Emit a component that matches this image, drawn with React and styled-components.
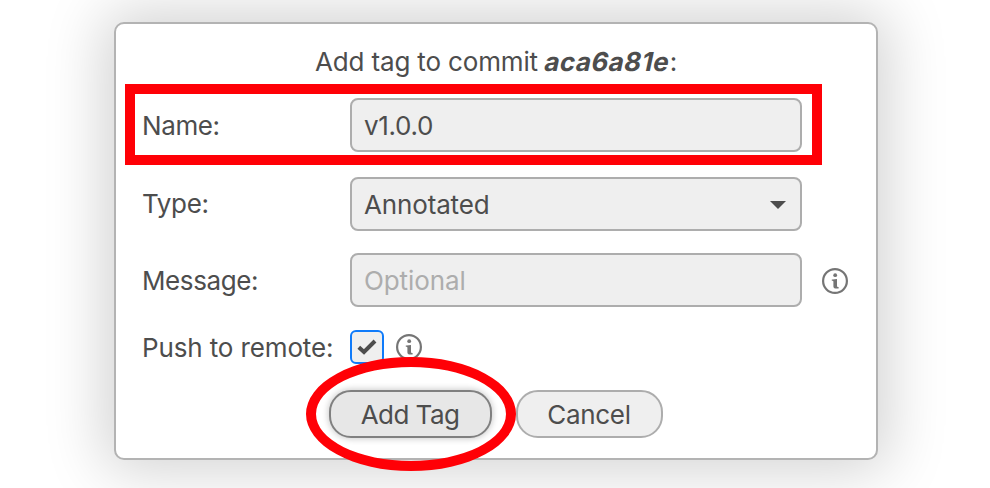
import styled, { createGlobalStyle } from "styled-components";
import { useState } from "react";

const GlobalStyle = createGlobalStyle`
  * {
    box-sizing: border-box;
  }
  body {
    margin: 0;
    background-color: #fff;
    overflow: hidden;
  }
`;

// container
const Page = styled.div`
  display: flex;
  justify-content: center;
  height: 488px;
  padding: 22px 0 28px 2px;
  font-family: Inter, "Liberation Sans", sans-serif;
  font-size: 26px;
  line-height: 32px;
  color: #4d4d4d;
`;

const Dialog = styled.form`
  width: 764px;
  height: 438px;
  padding: 22px 26px 0;
  background-color: #fff;
  border: 2px solid #b3b3b3;
  border-radius: 10px;
  box-shadow: 0 0 60px 10px rgba(0, 0, 0, 0.18);
`;

const Title = styled.div`
  text-align: center;
  white-space: nowrap;
  letter-spacing: -0.15px;
`;

// slanted upright glyphs, so the two-storey "a" is kept
const CommitHash = styled.span`
  display: inline-block;
  font-weight: 700;
  letter-spacing: 0.4px;
  transform: skewX(-12deg);
`;

// form rows
const Row = styled.div`
  position: relative;
  display: flex;
  align-items: center;
  height: ${({ $height }) => $height || 54}px;
  margin-top: ${({ $gap }) => $gap}px;
`;

const Label = styled.label`
  width: 208px;
  flex-shrink: 0;
  padding-top: ${({ $drop = 2 }) => $drop}px;
  white-space: nowrap;
  letter-spacing: ${({ $spacing }) => $spacing || 0}px;
`;

const TextInput = styled.input`
  width: 452px;
  height: 54px;
  padding: 0 12px;
  font: inherit;
  letter-spacing: ${({ $spacing }) => $spacing || 0}px;
  color: #4d4d4d;
  background-color: #efefef;
  border: 2px solid #adadad;
  border-radius: 8px;
  outline: none;
  &::placeholder {
    color: #adadad;
    opacity: 1;
  }
`;

const Select = styled.div`
  display: flex;
  align-items: center;
  justify-content: space-between;
  width: 452px;
  height: 54px;
  padding: 2px 14px 0 12px;
  letter-spacing: -0.15px;
  background-color: #efefef;
  border: 2px solid #adadad;
  border-radius: 8px;
`;

const Checkbox = styled.div`
  display: flex;
  align-items: center;
  justify-content: center;
  width: 34px;
  height: 34px;
  background-color: #efefef;
  border: 2px solid #0f7bfa;
  border-radius: 6px;
`;

const InfoWrapper = styled.span`
  display: flex;
  margin-left: ${({ $left }) => $left}px;
  padding-top: ${({ $drop }) => $drop || 0}px;
`;

// buttons
const Actions = styled.div`
  display: flex;
  gap: 24px;
  margin-top: 26px;
  padding-left: 187px;
`;

const Button = styled.button`
  position: relative;
  width: ${({ $primary }) => ($primary ? 163 : 147)}px;
  height: 48px;
  padding: 2px 1px 0 0;
  font: inherit;
  letter-spacing: ${({ $primary }) => ($primary ? -0.55 : -0.3)}px;
  white-space: nowrap;
  color: #4d4d4d;
  background-color: ${({ $primary }) => ($primary ? "#e7e7e7" : "#efefef")};
  border: 2px solid ${({ $primary }) => ($primary ? "#808080" : "#adadad")};
  border-radius: 22px;
  box-shadow: ${({ $primary }) =>
    $primary ? "0 0 6px 1px rgba(0, 0, 0, 0.2)" : "none"};
`;

// red marks
const BoxMark = styled.div`
  position: absolute;
  top: -14px;
  left: -17px;
  width: 697px;
  height: 81px;
  border: 10px solid #ff0006;
  pointer-events: none;
`;

const EllipseMark = styled.div`
  position: absolute;
  top: -35px;
  left: -25px;
  width: 210px;
  height: 114px;
  border: 10px solid #ff0006;
  border-radius: 50%;
  pointer-events: none;
`;

function InfoIcon({ left, drop }) {
  return (
    <InfoWrapper $left={left} $drop={drop}>
      <svg width="26" height="26" viewBox="0 0 26 26" fill="#757575">
        <circle
          cx="13"
          cy="13"
          r="11.9"
          fill="none"
          stroke="#757575"
          strokeWidth="2.2"
        />
        <circle cx="13.2" cy="7.2" r="1.9" />
        <path d="M9.8 11.4c1.6.1 3.4-.1 5.2-.3v6.7c0 1 .3 1.2 1.6 1.3v1.3c-2.4.4-5.2.3-5.2-2v-4.6c0-.9-.4-1.1-1.6-1.1z" />
      </svg>
    </InfoWrapper>
  );
}

function App() {
  const [name, setName] = useState("v1.0.0");
  const [message, setMessage] = useState("");
  const [push, setPush] = useState(true);

  return (
    <Page>
      <GlobalStyle />
      <Dialog onSubmit={(e) => e.preventDefault()}>
        <Title>
          Add tag to commit <CommitHash>aca6a81e</CommitHash>:
        </Title>
        <Row $gap={20}>
          <Label $spacing={-0.4}>Name:</Label>
          <TextInput
            $spacing={-0.3}
            value={name}
            onChange={(e) => setName(e.target.value)}
          />
          <BoxMark />
        </Row>
        <Row $gap={25}>
          <Label $spacing={-0.35} $drop={0}>
            Type:
          </Label>
          <Select>
            Annotated
            <svg width="16" height="8" viewBox="0 0 16 8">
              <path d="M0 0h16L8 8z" fill="#4d4d4d" />
            </svg>
          </Select>
        </Row>
        <Row $gap={22}>
          <Label $spacing={-0.4}>Message:</Label>
          <TextInput
            $spacing={-0.1}
            placeholder="Optional"
            value={message}
            onChange={(e) => setMessage(e.target.value)}
          />
          <InfoIcon left={20} drop={2} />
        </Row>
        <Row $gap={23} $height={34}>
          <Label $spacing={-0.13}>Push to remote:</Label>
          <Checkbox onClick={() => setPush(!push)}>
            {push && (
              <svg width="20" height="16" viewBox="0 0 20 16">
                <path
                  d="M1.8 8.2L7 13L18 2"
                  fill="none"
                  stroke="#4d4d4d"
                  strokeWidth="4"
                />
              </svg>
            )}
          </Checkbox>
          <InfoIcon left={12} />
        </Row>
        <Actions>
          <Button $primary>
            Add Tag
            <EllipseMark />
          </Button>
          <Button type="button">Cancel</Button>
        </Actions>
      </Dialog>
    </Page>
  );
}

export default App;
